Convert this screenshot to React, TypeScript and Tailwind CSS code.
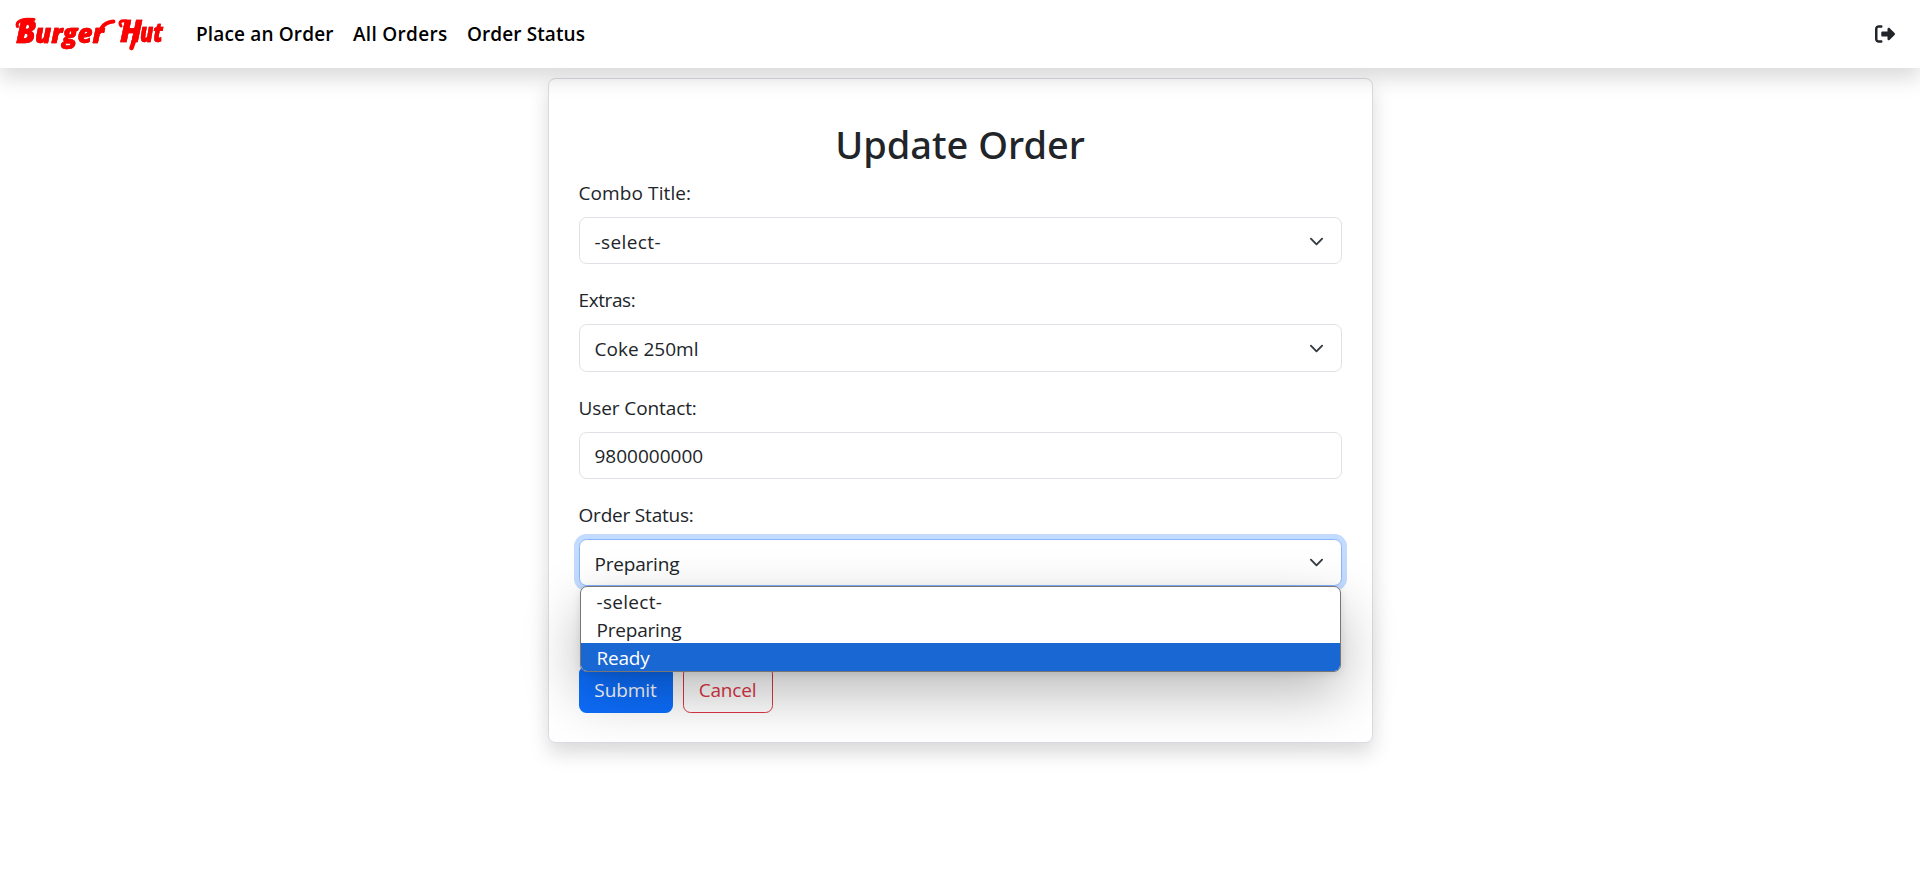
import type { ReactNode } from "react";
import { FaRightFromBracket } from "react-icons/fa6";

function Logo() {
  return (
    <svg width="160" height="60" viewBox="-4 -10 160 60" className="block" role="img" aria-label="Burger Hut">
      <g fill="#ff0000" stroke="#ff0000" strokeWidth="0.4" className="[font-family:'Open_Sans',sans-serif] font-extrabold italic [filter:drop-shadow(0.6px_0.8px_0.3px_rgba(110,0,0,0.7))]">
        <text x="3" y="28.5" fontSize="31" textLength="20" lengthAdjust="spacingAndGlyphs">B</text>
        <text x="22" y="28.5" fontSize="27" textLength="69" lengthAdjust="spacingAndGlyphs">urger</text>
        <text x="107" y="27.5" fontSize="30" textLength="22" lengthAdjust="spacingAndGlyphs">H</text>
        <text x="127" y="27.5" fontSize="27" textLength="23" lengthAdjust="spacingAndGlyphs">ut</text>
      </g>
      <g fill="none" stroke="#ff0000" strokeLinecap="round">
        <path d="M4.5 12.5C2.5 7 9 4.5 21 5.5" strokeWidth="3" />
        <path d="M88.5 14C91 10 95 8 100.5 7.5" strokeWidth="3.8" />
        <path d="M108 12C105.5 8 108 6 113 7" strokeWidth="3" />
        <path d="M122 23C121 28 119 32 118.5 34" strokeWidth="4.6" />
      </g>
    </svg>
  );
}

function Chevron() {
  return (
    <svg width="15" height="15" viewBox="0 0 16 16" fill="none" stroke="#343a40" strokeWidth="2" strokeLinecap="round" strokeLinejoin="round" className="relative -top-px">
      <path d="m2 5 6 6 6-6" />
    </svg>
  );
}

function Field({ label, labelClass, children }: { label: string; labelClass: string; children: ReactNode }) {
  return (
    <div className="relative mb-5">
      <div className={`mb-[9px] pt-px leading-[30px] ${labelClass}`}>{label}</div>
      {children}
    </div>
  );
}

const box = "flex h-[47.2px] items-center justify-between rounded-[7.5px] border bg-white pt-[3px] pl-[15px] pr-[17px]";

export default function App() {
  return (
    <div className="min-h-[875px] bg-white text-[19px] text-[#212529] [font-family:'Open_Sans','Noto_Sans',sans-serif]">
      <nav className="relative z-10 flex h-[68px] items-center bg-white pr-[25px] pl-[9px] shadow-[0_10px_20px_rgba(0,0,0,0.15)]">
        <Logo />
        <div className="ml-[27px] flex gap-[18px] pt-px font-semibold whitespace-nowrap text-black">
          <a className="w-[139px] tracking-[0.15px]">Place an Order</a>
          <a className="w-[96px] tracking-[0.3px]">All Orders</a>
          <a className="tracking-[0.1px]">Order Status</a>
        </div>
        <FaRightFromBracket className="ml-auto" size={20} />
      </nav>

      <main className="mx-auto mt-2.5 h-[665px] w-[825px] rounded-[7.5px] border border-[#d9dbe2] bg-white px-[30px] pt-[41.2px] shadow-[0_10px_20px_rgba(0,0,0,0.15)]">
        <h2 className="mb-2 text-center text-[38px] leading-[49px] font-medium [font-family:'Noto_Sans',sans-serif]">Update Order</h2>

        <Field label="Combo Title:" labelClass="tracking-[0.1px]">
          <div className={`${box} border-[#dee2e6]`}>
            <span className="tracking-[0.4px]">-select-</span>
            <Chevron />
          </div>
        </Field>
        <Field label="Extras:" labelClass="tracking-[-0.4px]">
          <div className={`${box} border-[#dee2e6]`}>
            <span>Coke 250ml</span>
            <Chevron />
          </div>
        </Field>
        <Field label="User Contact:" labelClass="tracking-[-0.1px]">
          <div className={`${box} border-[#dee2e6]`}>9800000000</div>
        </Field>
        <Field label="Order Status:" labelClass="tracking-[-0.2px]">
          <div className={`${box} border-[#86b7fe] shadow-[0_0_0_5px_rgba(13,110,253,0.25)]`}>
            <span className="tracking-[-0.2px]">Preparing</span>
            <Chevron />
          </div>
          <div className="absolute top-[87px] right-px left-px rounded-[7px] border border-[#767676] bg-white shadow-[0_22px_56px_rgba(0,0,0,0.27),0_2px_8px_rgba(0,0,0,0.1)]">
            <div className="overflow-hidden rounded-[6px] leading-[30px]">
              <div className="h-7 pl-4 tracking-[0.3px]">-select-</div>
              <div className="h-7 pl-4 tracking-[-0.2px]">Preparing</div>
              <div className="h-7 bg-[#1967d2] pl-4 tracking-[-0.2px] text-white">Ready</div>
            </div>
          </div>
        </Field>

        <div className="mt-[79.6px] flex gap-2.5">
          <button className="h-[47px] w-[94px] rounded-[7.5px] bg-[#0d6efd] pt-[3px] tracking-[-0.1px] text-white">Submit</button>
          <button className="h-[47px] w-[90px] rounded-[7.5px] border border-[#dc3545] pt-[3px] tracking-[-0.2px] text-[#dc3545]">Cancel</button>
        </div>
      </main>
    </div>
  );
}
